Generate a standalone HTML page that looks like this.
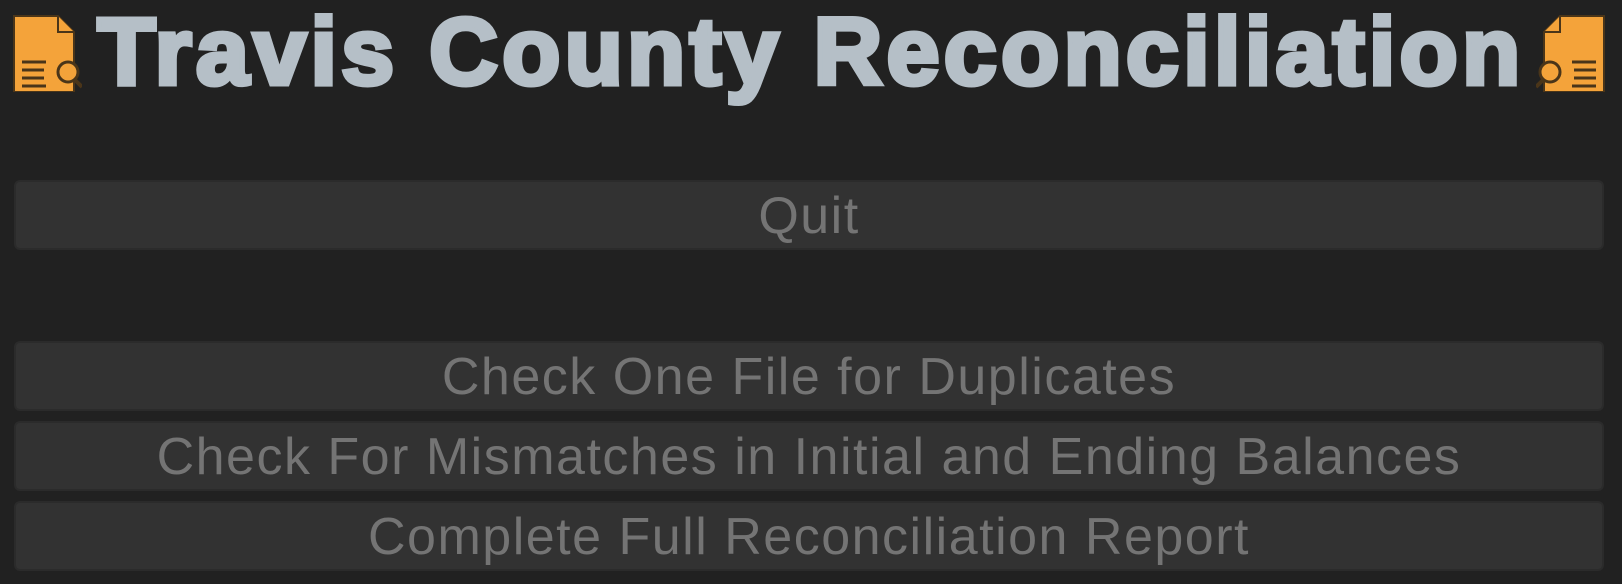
<!DOCTYPE html>
<html><head><style>
body{margin:0;width:1622px;height:584px;background:#212121;overflow:hidden;font-family:"Liberation Sans",sans-serif;position:relative}
.t{position:absolute;left:0;width:1622px;top:2px;text-align:center;color:#b5bfc7;font-weight:bold;font-size:95px;letter-spacing:4.4px;line-height:100px;-webkit-text-stroke:5px #b5bfc7}
.b{position:absolute;left:14px;width:1590px;height:70px;background:#323232;border:2px solid #2b2b2b;box-sizing:border-box;border-radius:6px;color:#747474;font-size:52px;letter-spacing:1.5px;text-align:center;line-height:68px}
svg{position:absolute;top:12px}
</style></head><body>
<svg style="left:10px" width="72" height="80" viewBox="0 0 72 80">
<path d="M4 4h44l16 16v60H4z" fill="#f4a33a" stroke="#4a3519" stroke-width="2"/>
<path d="M48 4v16h16" fill="#f4a33a" stroke="#4a3519" stroke-width="2"/>
<g stroke="#4a3519" stroke-width="3"><path d="M12 50h24M12 58h22M12 66h22M12 74h24"/></g>
<circle cx="58" cy="60" r="10" fill="#f4a33a" stroke="#4a3519" stroke-width="3"/>
<path d="M64 67l8 8" stroke="#4a3519" stroke-width="4"/>
</svg>
<div class="t">Travis County Reconciliation</div>
<svg style="left:1536px;transform:scaleX(-1)" width="72" height="80" viewBox="0 0 72 80">
<path d="M4 4h44l16 16v60H4z" fill="#f4a33a" stroke="#4a3519" stroke-width="2"/>
<path d="M48 4v16h16" fill="#f4a33a" stroke="#4a3519" stroke-width="2"/>
<g stroke="#4a3519" stroke-width="3"><path d="M12 50h24M12 58h22M12 66h22M12 74h24"/></g>
<circle cx="58" cy="60" r="10" fill="#f4a33a" stroke="#4a3519" stroke-width="3"/>
<path d="M64 67l8 8" stroke="#4a3519" stroke-width="4"/>
</svg>
<div class="b" style="top:180px">Quit</div>
<div class="b" style="top:341px">Check One File for Duplicates</div>
<div class="b" style="top:421px">Check For Mismatches in Initial and Ending Balances</div>
<div class="b" style="top:501px">Complete Full Reconciliation Report</div>
</body></html>
